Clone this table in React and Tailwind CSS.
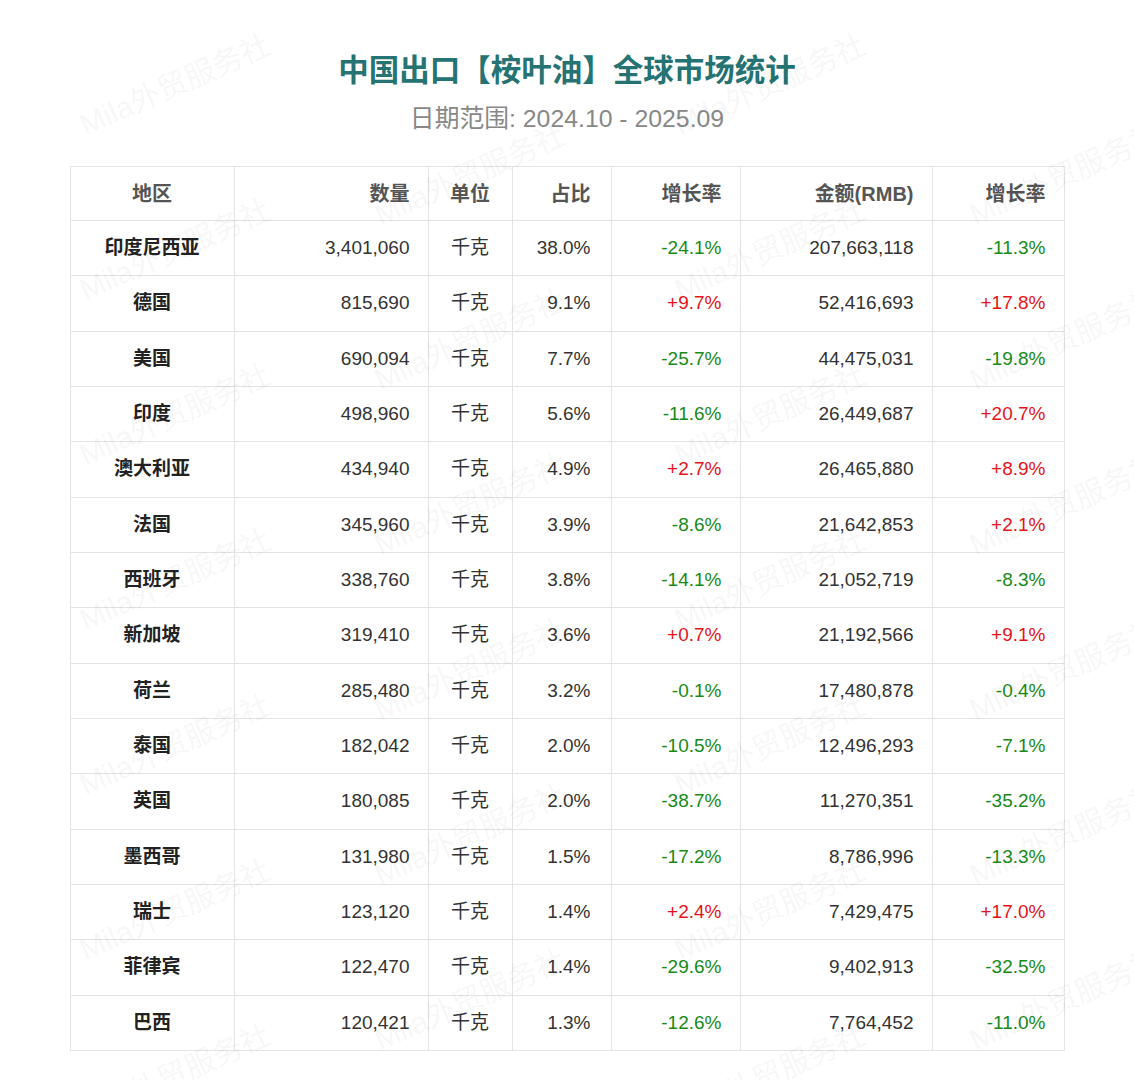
import React from "react";

const rows = [
  ["印度尼西亚", "3,401,060", "38.0%", "-24.1%", "207,663,118", "-11.3%"],
  ["德国", "815,690", "9.1%", "+9.7%", "52,416,693", "+17.8%"],
  ["美国", "690,094", "7.7%", "-25.7%", "44,475,031", "-19.8%"],
  ["印度", "498,960", "5.6%", "-11.6%", "26,449,687", "+20.7%"],
  ["澳大利亚", "434,940", "4.9%", "+2.7%", "26,465,880", "+8.9%"],
  ["法国", "345,960", "3.9%", "-8.6%", "21,642,853", "+2.1%"],
  ["西班牙", "338,760", "3.8%", "-14.1%", "21,052,719", "-8.3%"],
  ["新加坡", "319,410", "3.6%", "+0.7%", "21,192,566", "+9.1%"],
  ["荷兰", "285,480", "3.2%", "-0.1%", "17,480,878", "-0.4%"],
  ["泰国", "182,042", "2.0%", "-10.5%", "12,496,293", "-7.1%"],
  ["英国", "180,085", "2.0%", "-38.7%", "11,270,351", "-35.2%"],
  ["墨西哥", "131,980", "1.5%", "-17.2%", "8,786,996", "-13.3%"],
  ["瑞士", "123,120", "1.4%", "+2.4%", "7,429,475", "+17.0%"],
  ["菲律宾", "122,470", "1.4%", "-29.6%", "9,402,913", "-32.5%"],
  ["巴西", "120,421", "1.3%", "-12.6%", "7,764,452", "-11.0%"],
];

// watermark centers, staggered columns
const marks = [];
[175, 470, 770, 1065].forEach((x, i) => {
  const start = i % 2 === 0 ? 85 : 175;
  for (let y = start; y < 1140; y += 165) marks.push([x, y]);
});

function Rate({ v }) {
  const up = v.startsWith("+");
  return <span className={up ? "text-[#e5141b]" : "text-[#188a18]"}>{v}</span>;
}

export default function App() {
  return (
    <div
      className="relative w-full min-h-[1080px] bg-white overflow-hidden pt-[52px]"
      style={{ fontFamily: '"Liberation Sans", "Noto Sans CJK SC", sans-serif' }}
    >
      <h1 className="text-center text-[30.5px] leading-[36px] font-bold text-[#267373]">
        中国出口【桉叶油】全球市场统计
      </h1>
      <p className="mt-[17px] text-center text-[24.8px] leading-[28px] text-[#888888]">
        日期范围: 2024.10 - 2025.09
      </p>

      <table className="mt-[33px] mx-auto w-[994px] table-fixed border-collapse text-[19px]">
        <colgroup>
          <col className="w-[164px]" />
          <col className="w-[194px]" />
          <col className="w-[84px]" />
          <col className="w-[99px]" />
          <col className="w-[129px]" />
          <col className="w-[192px]" />
          <col className="w-[132px]" />
        </colgroup>
        <thead>
          <tr className="h-[54px] text-[20px] text-[#555555] font-bold">
            <th className="border border-[#e3e3e3] text-center">地区</th>
            <th className="border border-[#e3e3e3] text-right pr-[18px]">数量</th>
            <th className="border border-[#e3e3e3] text-center">单位</th>
            <th className="border border-[#e3e3e3] text-right pr-[20px]">占比</th>
            <th className="border border-[#e3e3e3] text-right pr-[18px]">增长率</th>
            <th className="border border-[#e3e3e3] text-right pr-[18px]">金额(RMB)</th>
            <th className="border border-[#e3e3e3] text-right pr-[18px]">增长率</th>
          </tr>
        </thead>
        <tbody>
          {rows.map((r) => (
            <tr key={r[0]} className="h-[55.33px] text-[#333333]">
              <td className="border border-[#e3e3e3] text-center font-bold text-[#222222]">{r[0]}</td>
              <td className="border border-[#e3e3e3] text-right pr-[18px]">{r[1]}</td>
              <td className="border border-[#e3e3e3] text-center">千克</td>
              <td className="border border-[#e3e3e3] text-right pr-[20px]">{r[2]}</td>
              <td className="border border-[#e3e3e3] text-right pr-[18px]"><Rate v={r[3]} /></td>
              <td className="border border-[#e3e3e3] text-right pr-[18px]">{r[4]}</td>
              <td className="border border-[#e3e3e3] text-right pr-[18px]"><Rate v={r[5]} /></td>
            </tr>
          ))}
        </tbody>
      </table>

      {/* watermark overlay */}
      <div className="pointer-events-none absolute inset-0">
        {marks.map(([x, y]) => (
          <span
            key={x + "-" + y}
            className="absolute whitespace-nowrap text-[30px] leading-none text-black/[0.055] -translate-x-1/2 -translate-y-1/2 -rotate-[24deg]"
            style={{ left: x, top: y }}
          >
            Mila外贸服务社
          </span>
        ))}
      </div>
    </div>
  );
}
